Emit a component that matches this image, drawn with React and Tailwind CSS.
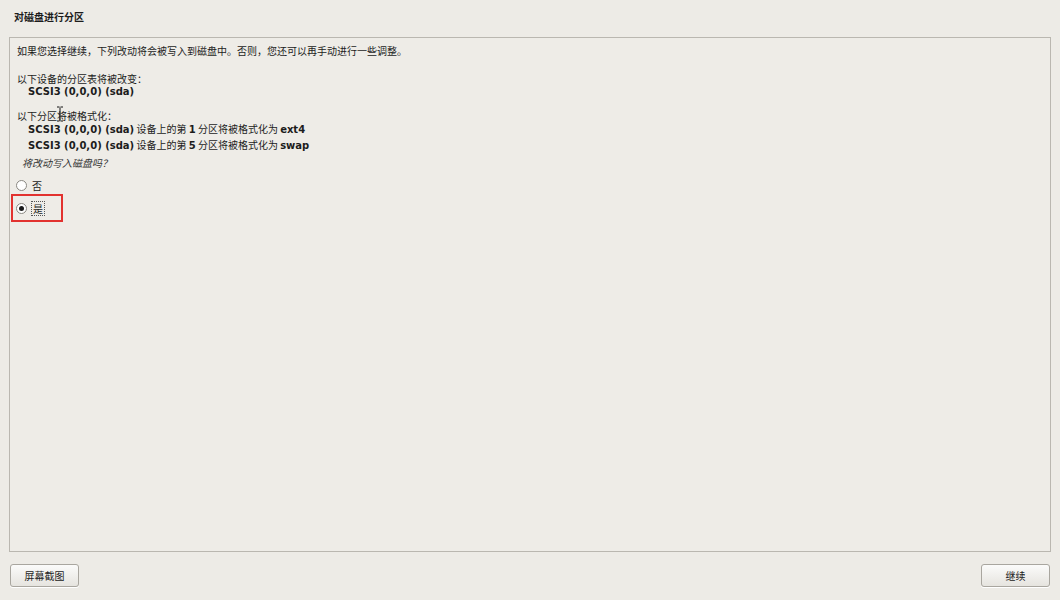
const cjk = { fontFamily: '"Noto Sans CJK SC", "DejaVu Sans", sans-serif' };

function B({ children }) {
  return (
    <span className="text-[10px] font-bold leading-[13px]" style={{ fontFamily: '"DejaVu Sans", sans-serif' }}>
      {children}
    </span>
  );
}

function Radio({ checked }) {
  return (
    <span className="flex h-[11px] w-[11px] items-center justify-center rounded-full border border-[#8a8882] bg-white">
      {checked && <span className="h-[5px] w-[5px] rounded-full bg-[#1a1a1a]" />}
    </span>
  );
}

function Button({ children }) {
  return (
    <button className="h-[23px] w-[69px] rounded-[3px] border border-[#a9a69f] bg-gradient-to-b from-[#fbfbfa] to-[#e6e4df] text-[10px] text-[#222] shadow-[0_1px_0_#fff]">
      {children}
    </button>
  );
}

export default function App() {
  return (
    <div className="flex h-[600px] w-full flex-col bg-[#edebe6] text-[#1c1c1c]" style={cjk}>
      <div className="px-[14px] pt-[10px] pb-[13px] text-[10px] font-bold leading-[14px]">对磁盘进行分区</div>

      <div className="mx-[9px] flex-1 border border-[#bab7b0] bg-[#eeece7] px-[7px] pt-[6px] text-[10px] leading-[13px]">
        <p className="h-[13px]">如果您选择继续，下列改动将会被写入到磁盘中。否则，您还可以再手动进行一些调整。</p>

        <p className="mt-[15px] h-[13px]">以下设备的分区表将被改变：</p>
        <p className="-mt-[1px] h-[13px] pl-[11px]">
          <B>SCSI3 (0,0,0) (sda)</B>
        </p>

        <p className="relative mt-[12px] h-[13px]">
          以下分区将被格式化：
          <svg className="absolute left-[39px] top-[-3px]" width="8" height="16" viewBox="0 0 8 16">
            <path d="M1 1h2.5M4.5 1H7M4 1.5v13M1 15h2.5M4.5 15H7" stroke="#111" strokeWidth="1" fill="none" />
          </svg>
        </p>
        <p className="h-[13px] pl-[11px]">
          <B>SCSI3 (0,0,0) (sda)</B> 设备上的第 <B>1</B> 分区将被格式化为 <B>ext4</B>
        </p>
        <p className="mt-[3px] h-[13px] pl-[11px]">
          <B>SCSI3 (0,0,0) (sda)</B> 设备上的第 <B>5</B> 分区将被格式化为 <B>swap</B>
        </p>
        <p className="mt-[5px] h-[13px] pl-[5px] italic text-[#333]">将改动写入磁盘吗？</p>

        <div className="mt-[8px] -ml-[6px] flex flex-col">
          <label className="flex h-[17px] items-center gap-[5px] pl-[5px]">
            <Radio />
            <span>否</span>
          </label>
          <label className="flex h-[28px] w-[52px] items-center gap-[4px] border-[2px] border-[#e2322f] pl-[3px]">
            <Radio checked />
            <span className="border border-dotted border-[#555] px-[1px] leading-[13px]">是</span>
          </label>
        </div>
      </div>

      <div className="flex h-[48px] items-center justify-between px-[10px] pb-[1px]">
        <Button>屏幕截图</Button>
        <Button>继续</Button>
      </div>
    </div>
  );
}
